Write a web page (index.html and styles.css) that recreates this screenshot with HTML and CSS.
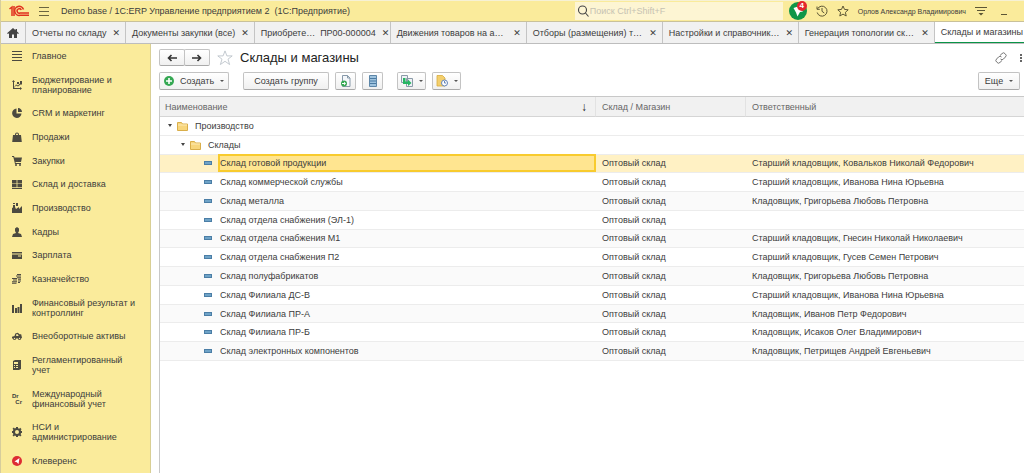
FILE: index.html
```
<!DOCTYPE html>
<html lang="ru">
<head>
    <meta charset="UTF-8">
    <meta name="viewport" content="width=device-width, initial-scale=1.0">
    <title>Склады и магазины</title>
    <link rel="stylesheet" href="styles.css">
</head>
<body>
    <header class="topbar">
        <svg class="logo" viewBox="0 0 20 12" fill="none" stroke="#e0311f" stroke-width="1.500">
            <path d="M.5 4 3 2V11M5 11V1"/>
            <path d="M14.500 4.500A4.500 4.500 0 1 0 11 10.300H20"/>
            <path d="M12.300 5A2.200 2.200 0 1 0 11 8H20"/>
        </svg>
        <button class="icon-btn menu-btn" aria-label="Меню">
            <svg width="12" height="10" viewBox="0 0 12 10" stroke="#6b6540" stroke-width="1"><path d="M1 1.500h10M1 5.500h10M1 9.500h10"/></svg>
        </button>
        <span class="app-title">Demo base / 1С:ERP Управление предприятием 2&nbsp; (1С:Предприятие)</span>
        <label class="search">
            <svg width="12" height="12" viewBox="0 0 12 12" fill="none" stroke="#444" stroke-width="1.100"><circle cx="5.500" cy="5" r="4"/><path d="m8.500 8 3 3.500"/></svg>
            <input type="text" placeholder="Поиск Ctrl+Shift+F" aria-label="Поиск">
        </label>
        <div class="top-tools">
            <button class="icon-btn bell" aria-label="Оповещения">
                <svg width="18" height="18" viewBox="0 0 18 18"><circle cx="9" cy="9" r="9" fill="#0f9648"/><path d="M4.500 6 9 4.500l5 5-3 .5-2.500 4.500-1.500-4z" fill="#fff"/></svg>
                <span class="badge">4</span>
            </button>
            <button class="icon-btn" aria-label="История">
                <svg width="12" height="12" viewBox="0 0 12 12" fill="none" stroke="#5c5635"><path d="M1.600 3.800A5 5 0 1 1 1.200 7.500M1 1.500v2.800h2.800M6 3v3.300L8.300 8"/></svg>
            </button>
            <button class="icon-btn" aria-label="Избранное">
                <svg width="12" height="12" viewBox="0 0 12 12" fill="none" stroke="#5c5635"><path d="m6 1 1.500 3.400 3.700.4-2.800 2.500.8 3.700L6 9.100 2.800 11l.8-3.700L.8 4.800l3.700-.4z"/></svg>
            </button>
            <a class="user" href="#">Орлов Александр Владимирович</a>
            <button class="icon-btn" aria-label="Сервис">
                <svg width="12" height="12" viewBox="0 0 12 12" fill="#5c5635"><path d="M0 2h12v1H0zM2 5h8v1H2zM3.500 8h5L6 10.500z"/></svg>
            </button>
            <button class="icon-btn minimize" aria-label="Свернуть">
                <svg width="8" height="12" viewBox="0 0 8 12" fill="#5c5635"><path d="M1 9h6v1H1z"/></svg>
            </button>
        </div>
    </header>

    <nav class="tabs">
        <a class="tab home" href="#" aria-label="Начальная страница">
            <svg width="12" height="10" viewBox="0 0 12 10" fill="#444"><path d="M6 0 0 5.200l1 .8L2 5.200V10h3V6.500h2V10h3V5.200l1 .8 1-.8-2-1.800V1H8.500v1.200z"/></svg>
        </a>
        <div class="tab"><a href="#">Отчеты по складу</a><button aria-label="Закрыть">✕</button></div>
        <div class="tab"><a href="#">Документы закупки (все)</a><button aria-label="Закрыть">✕</button></div>
        <div class="tab wide"><a href="#">Приобрете…&nbsp; ПР00-000004</a><button aria-label="Закрыть">✕</button></div>
        <div class="tab wide"><a href="#">Движения товаров на а…</a><button aria-label="Закрыть">✕</button></div>
        <div class="tab wide"><a href="#">Отборы (размещения) т…</a><button aria-label="Закрыть">✕</button></div>
        <div class="tab wide"><a href="#">Настройки и справочник…</a><button aria-label="Закрыть">✕</button></div>
        <div class="tab wide"><a href="#">Генерация топологии ск…</a><button aria-label="Закрыть">✕</button></div>
        <div class="tab active"><a href="#">Склады и магазины</a></div>
    </nav>

    <div class="workspace">
        <nav class="sidebar">
            <a href="#"><svg viewBox="0 0 10 10"><path d="M0 0h10v1H0zM0 3h10v1H0zM0 6h10v1H0zM0 9h10v1H0z"/></svg>Главное</a>
            <a href="#"><svg viewBox="0 0 10 10"><path d="M0 2 1.500 0 3 2H2v5.500l2-3 2 1 2-2V1h2v3.500H8.500L6 6.500l-2-1L2 8h6V7l2 1.500L8 10V9H1V2zM5 2h2v2H5z"/></svg>Бюджетирование и планирование</a>
            <a href="#"><svg viewBox="0 0 10 10"><path d="M4.500.5V5.500H9.500A4.700 4.700 0 1 1 4.500.5zM6 0a4.300 4.300 0 0 1 4 4H6z"/></svg>CRM и маркетинг</a>
            <a href="#"><svg viewBox="0 0 10 10"><path d="M1 3h2V2.500a2 2 0 0 1 4 0V3h2l.8 7H.2zM4 3h2v-.5a1 1 0 0 0-2 0z" fill-rule="evenodd"/></svg>Продажи</a>
            <a href="#"><svg viewBox="0 0 10 10"><path d="M0 0h2l.5 1.500H10L9 6H3.500l.2 1H9v1H3L1.300 1H0z"/><circle cx="4" cy="9" r="1"/><circle cx="8" cy="9" r="1"/></svg>Закупки</a>
            <a href="#"><svg viewBox="0 0 10 10"><path d="M0 1h4.600v3.400H0zM5.400 1H10v3.400H5.400zM0 5.100h4.600v3.100H0zM5.400 5.100H10v3.100H5.400zM0 9h10v1H0z"/></svg>Склад и доставка</a>
            <a href="#"><svg viewBox="0 0 10 10"><path d="M0 10V5l1-.5V2h2v2l1 2 3-2v2l3-3v7zM1 0h2v1H1zM4 0h2v3H4z"/></svg>Производство</a>
            <a href="#"><svg viewBox="0 0 10 10"><path d="M3 1.500 5 0l2 1.500V4L6 6l3 1 1 3H0l1-3 3-1-1-2z"/></svg>Кадры</a>
            <a href="#"><svg viewBox="0 0 10 10"><path d="M0 2h10v1.500H0zM0 4.500h10V9H0zM6 5.500v1h3v-1z" fill-rule="evenodd"/></svg>Зарплата</a>
            <a href="#"><svg viewBox="0 0 10 10"><path d="M5 0h4v1H5zM4 1.600h5v1H4zM5 3.200h4v1H5zM6 4.800h3v1H6zM0 4h5v1H0zM1 5.600h4v1H1zM0 7.200h5v1H0zM0 8.800h4.500v1H0zM6 6.400h3v1H6zM6 8h2v1H6z"/></svg>Казначейство</a>
            <a href="#"><svg viewBox="0 0 10 10"><path d="M0 2h2v8H0zM3 5h2v5H3zM5.500 4h2v6h-2zM8 1h2v9H8z"/></svg>Финансовый результат и контроллинг</a>
            <a href="#"><svg viewBox="0 0 12 10"><path d="M0 6 3 5l1-3 3-1 2 2h2l1 4-1 1H0zM5 3v2h3L7 3z" fill-rule="evenodd"/><circle cx="3" cy="8" r="1.800"/><circle cx="9" cy="8" r="1.800"/><circle cx="3" cy="8" r=".8" fill="#faeb9b"/><circle cx="9" cy="8" r=".8" fill="#faeb9b"/></svg>Внеоборотные активы</a>
            <a href="#"><svg viewBox="0 0 10 10"><path d="M1 1 3 0h6v9l-2 1H1zM2 2v2h4V2zM2 5v1h1V5zM4 5v1h2V5zM2 7v1h1V7zM4 7v1h2V7z" fill-rule="evenodd"/></svg>Регламентированный учет</a>
            <a href="#"><span class="drcr"><b>Dr</b><b>Cr</b></span>Международный финансовый учет</a>
            <a href="#"><svg viewBox="0 0 10 10"><path d="M4 0h2v1.200l1.300.5.900-.9 1.400 1.400-.9.900L9.100 4H10v2h-.9l-.5 1.200.9 1-1.400 1.300-.9-.9L6 9.100V10H4v-.9l-1.200-.5-1 .9L.5 8.200l.9-1L.9 6H0V4h.9l.5-1.200-.9-1L1.800.5l1 .9L4 .9zM5 3a2 2 0 1 0 0 4 2 2 0 0 0 0-4z" fill-rule="evenodd"/></svg>НСИ и администрирование</a>
            <a href="#"><svg viewBox="0 0 10 10"><circle cx="5" cy="5" r="5" fill="#dd2c33"/><path d="M7.500 2 6.500 8 4.800 6.200 2.500 5.500z" fill="#fff"/></svg>Клеверенс</a>
        </nav>

        <main class="content">
            <div class="title-row">
                <div class="history">
                    <button aria-label="Назад"><svg width="10" height="8" viewBox="0 0 10 8" fill="none" stroke="#333" stroke-width="1.600"><path d="M10 4H1.500M4.500 1l-3 3 3 3"/></svg></button>
                    <button aria-label="Вперед"><svg width="10" height="8" viewBox="0 0 10 8" fill="none" stroke="#333" stroke-width="1.600"><path d="M0 4h8.500M5.500 1l3 3-3 3"/></svg></button>
                </div>
                <button class="icon-btn" aria-label="В избранное">
                    <svg width="16" height="16" viewBox="0 0 16 16" fill="#fff" stroke="#b5bcc4" stroke-width=".8"><path d="m8 .9 1.900 5h5.300l-4.200 3.300 1.600 5.300L8 11.300l-4.600 3.200L5 9.200.8 5.900h5.300z"/></svg>
                </button>
                <h1>Склады и магазины</h1>
                <div class="title-tools">
                    <button class="icon-btn" aria-label="Ссылка">
                        <svg width="12" height="12" viewBox="0 0 12 12" fill="none" stroke="#777"><path d="M5 3.500 7 1.600a2 2 0 0 1 3 0l.4.400a2 2 0 0 1 0 3L8.500 7a2 2 0 0 1-3 0M7 8.500 5 10.400a2 2 0 0 1-3 0l-.4-.4a2 2 0 0 1 0-3L3.500 5a2 2 0 0 1 3 0"/></svg>
                    </button>
                    <button class="icon-btn" aria-label="Еще действия">
                        <svg width="2" height="8" viewBox="0 0 2 8" fill="#666"><path d="M0 0h2v2H0zM0 3h2v2H0zM0 6h2v2H0z"/></svg>
                    </button>
                </div>
            </div>

            <div class="toolbar">
                <button class="btn create">
                    <svg width="10" height="10" viewBox="0 0 10 10"><circle cx="5" cy="5" r="5" fill="#35a853"/><path d="M4.200 2h1.600v2.200H8v1.600H5.800V8H4.200V5.800H2V4.200h2.200z" fill="#fff"/></svg>
                    Создать <i class="caret"></i>
                </button>
                <button class="btn group">Создать группу</button>
                <button class="btn square" aria-label="Скопировать">
                    <svg width="12" height="12" viewBox="0 0 12 12"><path d="M2.500.5h5l2.500 2.500v8.500H2.500z" fill="#f4f7fa" stroke="#8799aa"/><path d="M7.500.5V3H10" fill="none" stroke="#8799aa"/><circle cx="4" cy="8.500" r="3" fill="#35a853"/><path d="M2 8h2V6.800l2 1.700-2 1.700V9H2z" fill="#fff"/></svg>
                </button>
                <button class="btn square" aria-label="Список">
                    <svg width="12" height="12" viewBox="0 0 12 12"><path d="M2.500.5h7v11h-7z" fill="#9fc3de" stroke="#5d86a8"/><path d="M3 3.500h6M3 6h6M3 8.500h6" stroke="#4b7ba3"/></svg>
                </button>
                <button class="btn drop spaced" aria-label="Создать на основании">
                    <svg width="12" height="12" viewBox="0 0 12 12"><path d="M.5.5h6v7h-6zM5.500 3.500h6v8h-6z" fill="#eef2f5" stroke="#8b9aa8"/><path d="M2 3h2.500v3.500H7V4.500L10.500 8 7 11V9H2z" fill="#27b562"/></svg>
                    <i class="caret"></i>
                </button>
                <button class="btn drop" aria-label="Отчеты">
                    <svg width="12" height="12" viewBox="0 0 12 12"><path d="M1 .5h5.500L9 3v8H1z" fill="#f3cf6d" stroke="#d8ac3e" stroke-width=".8"/><circle cx="8.500" cy="8" r="3" fill="#fff" stroke="#6484b8"/><path d="M8.500 6v2H10" fill="none" stroke="#6484b8"/></svg>
                    <i class="caret"></i>
                </button>
                <button class="btn more">Еще <i class="caret"></i></button>
            </div>

            <div class="list-area">
                <table class="list">
                    <thead>
                        <tr><th class="col-name"><span class="head">Наименование <span class="sort">↓</span></span></th><th class="col-type">Склад / Магазин</th><th>Ответственный</th></tr>
                    </thead>
                    <tbody>
                        <tr><td><div class="node level-1"><i class="open"></i><svg class="folder" viewBox="0 0 11 10"><path d="M.5 9.500v-8h4l1 1.500h5v6.500z" fill="#f8d67c" stroke="#d9ae4a"/><path d="M1 4h9" stroke="#fdeab5"/></svg>Производство</div></td><td></td><td></td></tr>
                        <tr><td><div class="node level-2"><i class="open"></i><svg class="folder" viewBox="0 0 11 10"><path d="M.5 9.500v-8h4l1 1.500h5v6.500z" fill="#f8d67c" stroke="#d9ae4a"/><path d="M1 4h9" stroke="#fdeab5"/></svg>Склады</div></td><td></td><td></td></tr>
                        <tr class="selected"><td><div class="node level-3"><i class="item"></i><span>Склад готовой продукции</span></div></td><td>Оптовый склад</td><td>Старший кладовщик, Ковальков Николай Федорович</td></tr>
                        <tr><td><div class="node level-3"><i class="item"></i><span>Склад коммерческой службы</span></div></td><td>Оптовый склад</td><td>Старший кладовщик, Иванова Нина Юрьевна</td></tr>
                        <tr><td><div class="node level-3"><i class="item"></i><span>Склад металла</span></div></td><td>Оптовый склад</td><td>Кладовщик, Григорьева Любовь Петровна</td></tr>
                        <tr><td><div class="node level-3"><i class="item"></i><span>Склад отдела снабжения (ЭЛ-1)</span></div></td><td>Оптовый склад</td><td></td></tr>
                        <tr><td><div class="node level-3"><i class="item"></i><span>Склад отдела снабжения М1</span></div></td><td>Оптовый склад</td><td>Старший кладовщик, Гнесин Николай Николаевич</td></tr>
                        <tr><td><div class="node level-3"><i class="item"></i><span>Склад отдела снабжения П2</span></div></td><td>Оптовый склад</td><td>Старший кладовщик, Гусев Семен Петрович</td></tr>
                        <tr><td><div class="node level-3"><i class="item"></i><span>Склад полуфабрикатов</span></div></td><td>Оптовый склад</td><td>Кладовщик, Григорьева Любовь Петровна</td></tr>
                        <tr><td><div class="node level-3"><i class="item"></i><span>Склад Филиала ДС-В</span></div></td><td>Оптовый склад</td><td>Старший кладовщик, Иванова Нина Юрьевна</td></tr>
                        <tr><td><div class="node level-3"><i class="item"></i><span>Склад Филиала ПР-А</span></div></td><td>Оптовый склад</td><td>Кладовщик, Иванов Петр Федорович</td></tr>
                        <tr><td><div class="node level-3"><i class="item"></i><span>Склад Филиала ПР-Б</span></div></td><td>Оптовый склад</td><td>Кладовщик, Исаков Олег Владимирович</td></tr>
                        <tr><td><div class="node level-3"><i class="item"></i><span>Склад электронных компонентов</span></div></td><td>Оптовый склад</td><td>Кладовщик, Петрищев Андрей Евгеньевич</td></tr>
                    </tbody>
                </table>
            </div>
        </main>
    </div>
</body>
</html>
```
FILE: styles.css
```
* {
    box-sizing: border-box;
}
body {
    margin: 0;
    min-height: 100vh;
    display: flex;
    flex-direction: column;
    font-family: "Liberation Sans", Arial, sans-serif;
    font-size: 9px;
    color: #3c3c3c;
    background: #fff;
    border-left: 1px solid #d6cd9c;
    overflow-x: hidden;
}
a {
    color: inherit;
    text-decoration: none;
}
button, input {
    font: inherit;
    color: inherit;
}
svg {
    display: block;
    flex: none;
}
.icon-btn {
    padding: 0;
    border: 0;
    background: none;
}

/* верхняя панель */
.topbar {
    display: flex;
    align-items: center;
    height: 22px;
    padding-left: 8px;
    background: #faeb9b;
    border-top: 1px solid #f6f1d4;
    border-bottom: 1px solid #c9c19a;
}
.logo {
    width: 20px;
    height: 12px;
}
.menu-btn {
    margin: 0 11px 0 9px;
}
.app-title {
    flex: 1;
    white-space: nowrap;
}
.search {
    display: flex;
    align-items: center;
    width: 208px;
    height: 18px;
    padding-left: 2px;
    background: #fdf5d3;
}
.search input {
    flex: 1;
    min-width: 0;
    padding: 0 0 0 1px;
    border: 0;
    background: none;
    outline: none;
}
.search input::placeholder {
    color: #c6c2b2;
}
.top-tools {
    display: flex;
    align-items: center;
    gap: 9px;
    padding: 0 16px 0 6px;
}
.bell {
    position: relative;
}
.badge {
    position: absolute;
    top: -1px;
    right: 0;
    width: 10px;
    height: 10px;
    border-radius: 50%;
    background: #e3262e;
    color: #fff;
    font-size: 8px;
    font-weight: bold;
    line-height: 10px;
}
.user {
    font-size: 7px;
    white-space: nowrap;
}
.minimize {
    margin-left: 4px;
}

/* вкладки */
.tabs {
    display: flex;
    height: 22px;
    background: #f1f1f1;
    border-bottom: 1px solid #bdbdbd;
    overflow: hidden;
}
.tab {
    display: flex;
    flex: none;
    align-items: center;
    justify-content: space-between;
    gap: 6px;
    padding: 0 5px 0 6px;
    border-right: 1px solid #c4c4c4;
    white-space: nowrap;
}
.tab button {
    padding: 0;
    border: 0;
    background: none;
    font-family: "DejaVu Sans", sans-serif;
    font-size: 9px;
    font-weight: bold;
}
.home {
    width: 25px;
}
.wide {
    width: 136px;
}
.active {
    flex: 1 0 auto;
    padding-right: 0;
    border-right: 0;
    background: #fff;
    border-bottom: 1px solid #0a9447;
}

.workspace {
    flex: 1;
    display: flex;
}

/* разделы */
.sidebar {
    flex: none;
    display: flex;
    flex-direction: column;
    justify-content: space-between;
    width: 150px;
    padding: 7px 9px 7px 11px;
    background: #faeb9b;
    border-right: 1px solid #d9cf94;
    line-height: 10px;
}
.sidebar a {
    display: flex;
    align-items: center;
    gap: 10px;
}
.sidebar svg {
    width: 10px;
    height: 10px;
    fill: #4c4a40;
}
.drcr {
    flex: none;
    width: 10px;
    font-size: 6px;
    line-height: 6px;
}
.drcr b {
    display: block;
}
.drcr b + b {
    text-align: right;
}

/* форма списка */
.content {
    flex: 1;
    display: flex;
    flex-direction: column;
    min-width: 0;
    padding: 5px 0 0 8px;
}
.title-row {
    display: flex;
    align-items: center;
    gap: 7px;
    height: 17px;
}
.title-row h1 {
    margin: 0;
    font-size: 13px;
    font-weight: normal;
    line-height: 16px;
    color: #222;
}
.history {
    display: flex;
}
.history button, .btn {
    display: flex;
    align-items: center;
    justify-content: center;
    padding: 0;
    border: 1px solid #c3c3c3;
    border-bottom-color: #a9a9a9;
    border-radius: 2px;
    background: linear-gradient(#fff, #f0f0f0);
}
.history button {
    width: 26px;
    height: 17px;
}
.history button + button {
    margin-left: -1px;
}
.title-tools {
    display: flex;
    align-items: center;
    gap: 13px;
    margin-left: auto;
    padding-right: 2px;
}
.toolbar {
    display: flex;
    gap: 6px;
    padding: 6px 4px 6px 0;
}
.btn {
    height: 18px;
    gap: 6px;
    white-space: nowrap;
}
.create {
    width: 70px;
    margin-right: 8px;
}
.group {
    width: 86px;
}
.square {
    width: 21px;
}
.drop {
    width: 29px;
}
.spaced {
    margin-left: 8px;
}
.more {
    width: 42px;
    margin-left: auto;
}
.caret {
    border: 2px solid transparent;
    border-top-color: #555;
    border-bottom: 0;
}

.list-area {
    flex: 1;
    border-left: 1px solid #c8c8c8;
    border-top: 1px solid #c8c8c8;
}
.list {
    width: 100%;
    height: 264px;
    table-layout: fixed;
    border-collapse: separate;
    border-spacing: 0;
}
.list th, .list td {
    height: 18px;
    padding: 0 0 0 6px;
    border-bottom: 1px solid #ececec;
    text-align: left;
    font-weight: normal;
    line-height: 12px;
    white-space: nowrap;
}
.list th {
    height: 20px;
    color: #666;
    background: #f1f1f1;
    border-bottom-color: #d5d5d5;
    border-right: 1px solid #e2e2e2;
}
.list th:first-child {
    padding-left: 5px;
}
.list th:last-child {
    border-right: 0;
}
.list td:first-child {
    padding: 0;
}
.col-name {
    width: 436px;
}
.col-type {
    width: 150px;
}
.head {
    display: flex;
    justify-content: space-between;
    padding-right: 8px;
}
.sort {
    color: #222;
    font-size: 12px;
}
.list tr:nth-child(odd) td {
    background: #fafafa;
}
.list tr:first-child td {
    background: #fff;
}
.list tr.selected td {
    background: #fff1c4;
}
.node {
    display: flex;
    align-items: center;
    height: 17px;
}
.level-1 {
    padding-left: 8px;
}
.level-2 {
    padding-left: 21px;
}
.level-3 {
    padding-left: 44px;
}
.open {
    margin-right: 5px;
    border: 2px solid transparent;
    border-top: 3px solid #444;
    border-bottom: 0;
}
.folder {
    width: 11px;
    height: 10px;
    margin-right: 7px;
}
.item {
    width: 8px;
    height: 4px;
    margin-right: 6px;
    background: #6fa3c7;
    border: 1px solid #4b7ea6;
}
.node span {
    flex: 1;
    padding: 1px 0;
    border: 2px solid transparent;
}
.selected .node span {
    background: #ffe590;
    border-color: #f8cb2e;
}
```
